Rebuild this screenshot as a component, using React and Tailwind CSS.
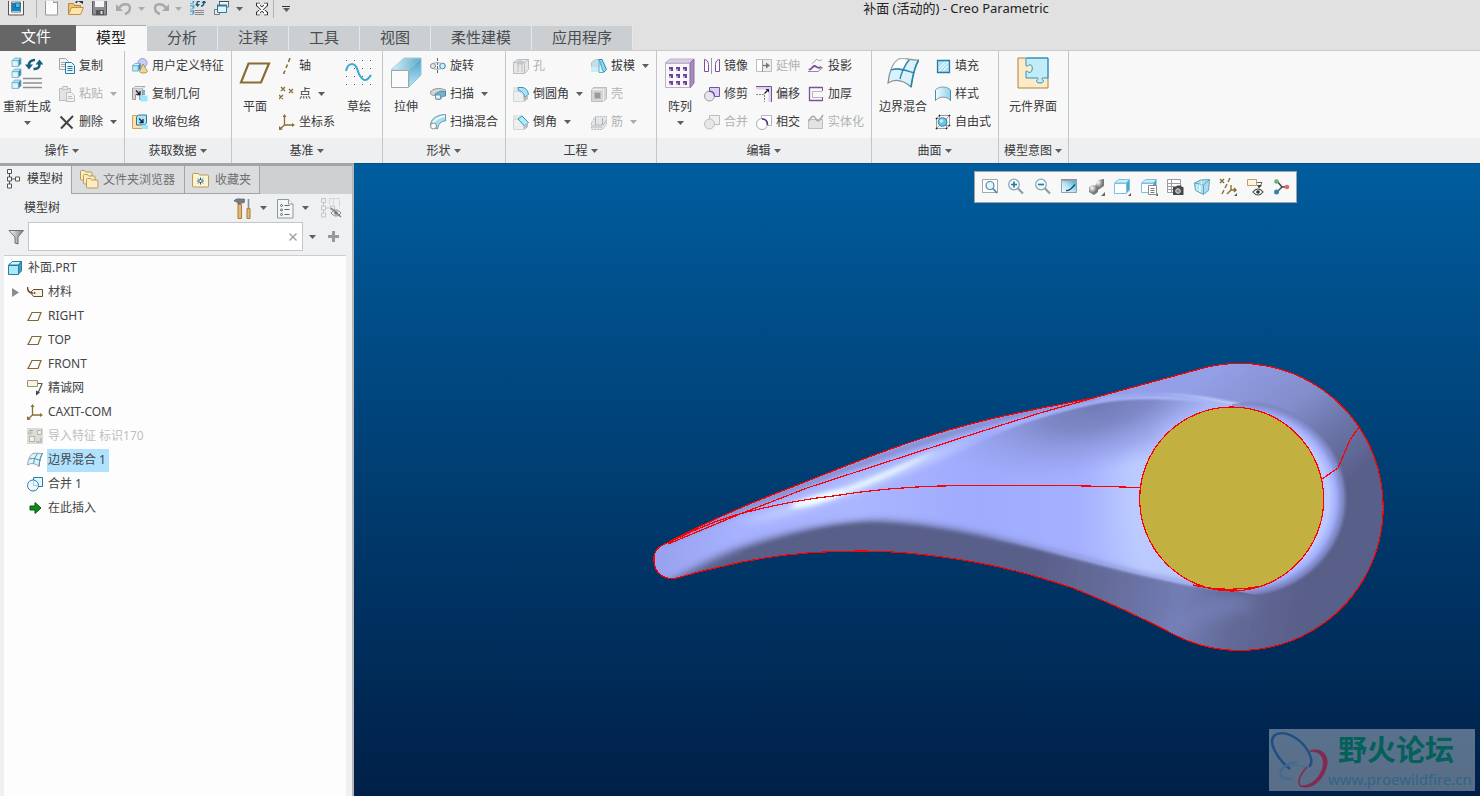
import { useState } from 'react';

const Svg = ({ s = 16, w, h, children }) => (
  <svg width={w || s} height={h || s} viewBox={`0 0 ${w || s} ${h || s}`} fill="none" className="shrink-0" aria-hidden="true">
    {children}
  </svg>
);

const Caret = ({ off, className = '' }) => (
  <svg width="7" height="4" viewBox="0 0 7 4" className={`shrink-0 ${className}`} aria-hidden="true">
    <path d="M0 0h7L3.500 4z" fill={off ? '#a9abad' : '#5c5e60'} />
  </svg>
);

const B = '#2a7ba2';
const G = '#bbbdbf';
const P = '#7b4fa0';
const T = '#8a6d35';

// Small isometric cube
const Cube = ({ x = 0, y = 0, k = 1, face = '#dff5fd', side = '#2b86ad', top = '#b4e5f6', line = '#68aac4' }) => (
  <g transform={`translate(${x} ${y}) scale(${k})`} stroke={line} strokeWidth={0.8 / k} strokeLinejoin="round">
    <path d="M0.500 3.500L3 1h6L6.500 3.500z" fill={top} />
    <path d="M6.500 3.500L9 1v5.500L6.500 9z" fill={side} />
    <path d="M0.500 3.500h6V9h-6z" fill={face} />
  </g>
);

const icons = {
  app: (
    <Svg>
      <path d="M.5 -2h15v16H.5z" fill="#f4f4f4" stroke="#555" />
      <path d="M3.500 1h9v10h-9z" fill="#fff" stroke="#777" />
      <path d="M4 2h8v8H4z" fill="#0b84c8" />
      <path d="M7.500 2h4.500v4.500H7.500z" fill="#43b9ee" stroke="#075d92" strokeWidth=".7" />
    </Svg>
  ),
  fresh: <Svg><path d="M.5 -3h8l4 4v13H.5z" fill="#fcfcfc" stroke="#999" /><path d="M8.500 -2v3.500h4" stroke="#999" fill="#ddd" /></Svg>,
  open: (
    <Svg>
      <path d="M.5 13V2.500h5l1 2h6v3" fill="#ecc36e" stroke="#b88732" />
      <path d="M0.500 13.500L3.500 6.500H15.500L12.500 13.500z" fill="#fde5ae" stroke="#c3923d" />
      <path d="M8 2c1-3 3-3 5-1.500V-1" stroke="#333" strokeWidth="1.600" /><path d="M10 0h5v3z" fill="#333" />
    </Svg>
  ),
  save: (
    <Svg>
      <path d="M0.500 -2h14v16h-14z" fill="#8b8d92" stroke="#5c5e62" />
      <path d="M3 -2h9v8H3z" fill="#f5f5f5" /><path d="M4 9h8v5H4z" fill="#54565a" /><path d="M8.500 10h2v3h-2z" fill="#ddd" />
    </Svg>
  ),
  undo: <Svg><path d="M3 7c4-6 11-4 11 0 0 3-2 5-5 6" stroke="#a8a9ab" strokeWidth="2.400" /><path d="M0 3v7h7z" fill="#a8a9ab" /></Svg>,
  redo: <Svg><path d="M13 7C9 1 2 3 2 7c0 3 2 5 5 6" stroke="#a8a9ab" strokeWidth="2.400" /><path d="M16 3v7H9z" fill="#a8a9ab" /></Svg>,
  regenSmall: (
    <Svg>
      <Cube x={-0.500} y={-2} k={0.500} /><Cube x={-0.500} y={3.500} k={0.500} /><Cube x={-0.500} y={9} k={0.500} />
      <path d="M5 9.500h9M5 11.500h9M5 13.500h9" stroke="#85878a" />
      <path d="M7 3c0-2 1-3 3-3M14 1c0 3-1 4-3 4" stroke="#155e80" strokeWidth="1.600" />
      <path d="M5 3h5L7.500 6zM11.500 2h5L14 -1z" fill="#155e80" />
    </Svg>
  ),
  windows: (
    <Svg>
      <path d="M5.500 -1h9v7h-9z" fill="#e8f6fc" stroke="#666" /><path d="M5 0h10" stroke="#4a4c50" strokeWidth="2" />
      <path d="M.5 8.500h5v5h-5z" fill="#eee" stroke="#777" />
      <path d="M3.500 4.500h9v7h-9z" fill="#e2f5fc" stroke={B} /><path d="M3 4.500h10" stroke={B} strokeWidth="2" />
    </Svg>
  ),
  close: <Svg w={14} h={16}><path d="M3 4l8 8M11 4l-8 8M1 3.500h4M9 3.500h4M1 12.500h4M9 12.500h4" stroke="#333" strokeWidth="3.600" /><path d="M3 4l8 8M11 4l-8 8M2 3.500h3M9 3.500h3M2 12.500h3M9 12.500h3" stroke="#fff" strokeWidth="1.800" /></Svg>,

  // 32px ribbon icons
  regen: (
    <Svg s={32}>
      <Cube x={0.500} y={0} k={1.050} /><Cube x={0.500} y={11} k={1.050} /><Cube x={0.500} y={22} k={1.050} />
      <path d="M12 21.500h19M12 26h19M12 30.500h19" stroke="#8d8f92" strokeWidth="1.600" />
      <path d="M18 8c0-3 2-5 6-5M28.500 7c0 4-2 5-6 5" stroke="#155e80" strokeWidth="2.600" />
      <path d="M14 7.500h8l-4 5zM24.500 7.500h8L28.500 2.500z" fill="#155e80" />
    </Svg>
  ),
  plane: <Svg s={32}><path d="M9.500 6.500H30L22 25.500H2z" stroke={T} strokeWidth="2.200" /></Svg>,
  sketch: (
    <Svg s={32}>
      {[3, 11, 19, 27].map(y => [3, 11, 19, 27].map(x => <path key={`${x}-${y}`} d={`M${x} ${y}.500h1`} stroke="#555" />))}
      <path d="M3 14C5 5 12 5 14.500 13S22 28 28 18" stroke="#3aa6d4" strokeWidth="2" />
    </Svg>
  ),
  extrude: (
    <Svg s={32}>
      <defs>
        <linearGradient id="ex" x1="0" y1="0" x2="0" y2="1"><stop stopColor="#4b9fc4" /><stop offset="1" stopColor="#b4e8f8" /></linearGradient>
        <linearGradient id="ext"><stop stopColor="#d6f3fc" /><stop offset="1" stopColor="#5fa9c8" /></linearGradient>
      </defs>
      <path d="M1 13L14 1h17L19 13z" fill="url(#ext)" stroke="#a3cddd" />
      <path d="M19 13L31 1v17L19 30z" fill="url(#ex)" stroke="#8cc2d8" />
      <path d="M1.500 13.500h17v17h-17z" fill="#fbfbfb" stroke="#a4a6a9" />
    </Svg>
  ),
  pattern: (
    <Svg s={32}>
      <path d="M1 6l5-4h24l-4 4z" fill="#d9cde6" stroke="#bdb1cb" /><path d="M26 6l4-4v24l-4 5z" fill="#a58abf" stroke="#8a6fa6" />
      <path d="M1.500 6.500h24v24h-24z" fill="#f9f7fb" stroke="#b9b5be" />
      {[10, 17, 24].map(y => [5, 12, 19].map(x => <path key={`${x}-${y}`} d={`M${x} ${y}h4v4h-4z`} fill="#6a4692" />))}
      {[10, 17, 24].map(y => [5, 12, 19].map(x => <path key={`${x}+${y}`} d={`M${x} ${y + 2}h2v2h-2z`} fill="#c3aadd" />))}
    </Svg>
  ),
  blend: (
    <Svg s={32}>
      <path d="M1 26C2 15 6 5 12 2c8-2 13 2 20 1-4 5-6 14-8 27C17 24 9 21 1 26z" fill="#d9f2fb" stroke="#8a8d91" strokeWidth="1.200" />
      <path d="M12 2c5-1 8 0 11 1-4 4-6 8-7 11-4-3-7-3-12-1 2-5 4-9 8-11z" fill="#fff" stroke="#a6a9ac" />
      <path d="M22 3c-4 4-8 14-9 19M4 13c8-3 16 1 23 3" stroke="#2686ad" strokeWidth="1.300" />
      <path d="M32 3c-4 5-6 14-8 27" stroke="#2686ad" strokeWidth="1.600" />
    </Svg>
  ),
  puzzle: (
    <Svg s={32}>
      <path d="M1 1h30v30H1z" fill="#fdebc8" />
      <path d="M9 1h22v20h-5c-2 0-1 1.500 0 2 3 4-9 4-6 0 1-.5 2-2 0-2H9v-6c0-2 1.500-1 2 0 5 3 6-9 1-7-1 1-3 2-3 0z" fill="#c3ecf9" stroke="#3093b8" />
      <path d="M10 1h21v21" stroke="#3093b8" /><path d="M9 1H1v30h30v-9" stroke="#a8853f" />
    </Svg>
  ),

  // 16px ribbon icons
  copy: (
    <Svg>
      <path d="M.5 .5h6l3 3v8h-9z" fill="#f4f4f4" stroke="#a0a2a4" /><path d="M2 4.500h5M2 6.500h4M2 8.500h4" stroke="#aaa" />
      <path d="M6.500 4.500h6l3 3v8h-9z" fill="#e7f6fc" stroke={B} /><path d="M8.500 8.500h5M8.500 10.500h5M8.500 12.500h5" stroke={B} />
    </Svg>
  ),
  paste: (
    <Svg>
      <path d="M.5 2.500h11v12H.5z" fill="#e2e3e4" stroke={G} /><path d="M3.500 .5h5v3h-5z" fill="#eee" stroke={G} />
      <path d="M7.500 6.500h5l3 3v6h-8z" fill="#f2f2f2" stroke={G} /><path d="M9 10.500h4M9 12.500h5" stroke={G} />
    </Svg>
  ),
  remove: <Svg><path d="M1.500 2.500l12 12M14 2L2 14.500" stroke="#444" strokeWidth="2" /></Svg>,
  userFeature: (
    <Svg>
      <circle cx="10.500" cy="5" r="4.500" fill="#c9ccf4" stroke="#979bd3" />
      <Cube x={0} y={4.500} k={0.950} face="#b3e9fb" top="#d8f5fe" />
      <path d="M11 6l4.500 7.500c-1 2-7 2-8 0z" fill="#f0d69a" stroke="#b3925a" />
    </Svg>
  ),
  copyGeom: (
    <Svg>
      <path d="M.5 2.500h10v11h-3v-5h-4v5h-3z" fill="#d2d4d6" stroke="#999b9e" /><path d="M1 2.500L3 .5h10l-2 2" fill="#eee" stroke="#aaa" />
      <path d="M4 4.500l4 4M8 5V8.500H4.500" stroke="#222" strokeWidth="1.300" />
      <path d="M8.500 9.500h7v6h-7z" fill="#9de7fb" /><path d="M11 4h2v5h-2z" fill="#6db6d2" />
    </Svg>
  ),
  shrink: (
    <Svg>
      <path d="M.5 1.500h6l1 1h4v12H.5z" fill="#fbe3ab" stroke="#cca55c" />
      <path d="M4.500 3l2-2h8v8l-2 2h-8z" fill="#aee4f6" stroke={B} /><path d="M7 4.500l4 4M11 5v3.500H7.500" stroke="#124" strokeWidth="1.300" />
      <path d="M10 11h6v4h-6z" fill="#9de7fb" />
    </Svg>
  ),
  axis: <Svg><path d="M11 0L9.500 4M8.500 6.500L7 10M6 12.500L4.500 16" stroke={T} strokeWidth="1.600" /></Svg>,
  points: <Svg><path d="M2 1l4 4M6 1L2 5M10 3l4 4M14 3l-4 4M0 9l4 4M4 9l-4 4" stroke={T} strokeWidth="1.300" /></Svg>,
  csys: (
    <Svg>
      <path d="M5.500 2v9h8M5.500 11l-4.500 4" stroke={T} strokeWidth="1.300" />
      <path d="M5.500 0l2 3h-4zM16 11l-3-2v4zM0 16v-4l4 3.500z" fill={T} />
    </Svg>
  ),
  revolve: (
    <Svg>
      <path d="M7.500 0v16" stroke="#666" strokeDasharray="3 1" />
      <circle cx="3" cy="8" r="2.500" fill="#e8e8e8" stroke="#84878b" /><circle cx="12.500" cy="8" r="2.800" fill="#cbeefa" stroke="#2c88ae" />
      <path d="M3 5.500c2-1 6-1 9 0M3 10.500c2 1 5 1 9 0" stroke="#a4a7aa" />
    </Svg>
  ),
  sweep: (
    <Svg>
      <path d="M.5 6c2-4 10-4 12-3l3 1v5c-3 0-4 1-5 4H7V9C4 10 .5 10 .5 6z" fill="#d2d5d8" stroke="#92969a" />
      <path d="M5 8l6-3 4.500 1v4c-3 0-4 1-5 3H6z" fill="#6fb5d3" stroke="#4b8ba8" />
      <path d="M5.500 9h5v4h-5z" fill="#dff4fb" stroke="#7d98a3" />
    </Svg>
  ),
  sweptBlend: (
    <Svg>
      <path d="M.5 11C1 5 6 1 15.500 .5V7c-5 0-7 3-8 8z" fill="#a9ddf0" stroke="#5e9bb5" />
      <path d="M3 9c2-4 6-6 12-7" stroke="#fff" strokeWidth="1.500" /><circle cx="3.500" cy="12" r="3" fill="#fafafa" stroke="#8b8d90" />
    </Svg>
  ),
  hole: (
    <Svg>
      <path d="M.5 4.500l4-3h11v10l-4 4H.5z" fill="#e6e7e8" stroke={G} />
      <path d="M.5 4.500h11l4-3M11.500 4.500v11M5 5v9M9 5v9" stroke={G} /><ellipse cx="7" cy="4.500" rx="3" ry="1.500" fill="#c8cacc" stroke={G} />
    </Svg>
  ),
  round: (
    <Svg>
      <path d="M.5 5.500h6l4 4v6H.5z" fill="#eeeeef" stroke="#d3d5d6" /><path d="M0 1h9l-3 4H0z" fill="#e3e4e5" />
      <path d="M5 1.500h5c3 1 5 3 5.500 7l-4 3c0-4-2-6-6-7z" fill="#a9e4f7" stroke="#3b94b8" /><path d="M11 12l4-3v4l-4 3z" fill="#bbbdbf" />
    </Svg>
  ),
  chamfer: (
    <Svg>
      <path d="M.5 5.500h5l5 5v5H.5z" fill="#eeeeef" stroke="#d3d5d6" /><path d="M0 1h9l-3 4H0z" fill="#e3e4e5" />
      <path d="M5 5l4-3 6.500 6.500-4 3.500z" fill="#a9ecfc" stroke="#3b94b8" /><path d="M11 12l4-3v4l-4 3z" fill="#bbbdbf" />
    </Svg>
  ),
  draft: (
    <Svg>
      <path d="M.5 4.500l4-3h6v12h-10z" fill="#c3dfe9" stroke="#a9c8d4" /><path d="M0 9h10v5H0z" fill="#c8eefa" />
      <path d="M8 1.500h3l4.500 10-3 3z" fill="#8fd8f1" stroke="#2c88ae" /><path d="M8 2l4.500 12.500H8z" fill="#d9f3fc" stroke="#62aeca" />
    </Svg>
  ),
  shell: (
    <Svg>
      <path d="M.5 3.500l2-2h13v11l-3 3H.5z" fill="#d5d6d7" stroke={G} /><path d="M.5 3.500h12v12" stroke="#eee" />
      <path d="M3.500 6.500h6v6h-6z" fill="#97999b" stroke="#bbb" />
    </Svg>
  ),
  rib: (
    <Svg>
      <path d="M.5 8.500l4-6h11v8l-4 5H.5z" fill="#e4e5e6" stroke={G} strokeDasharray="2 1" />
      <path d="M4.500 3v8h7V4M12 11l3-4" stroke="#b0b2b4" /><path d="M1 11h10v3H1z" fill="#cfd0d2" />
    </Svg>
  ),
  mirror: <Svg><path d="M7.500 0v16" stroke="#999" /><path d="M.5 1.500v12h4v-7c0-3-2-5-4-5zM15.500 1.500v12h-4v-7c0-3 2-5 4-5z" stroke={P} fill="#fff" /></Svg>,
  trim: (
    <Svg>
      <path d="M5.500 1.500h10v9h-10z" fill="#d9d3f5" stroke={P} /><circle cx="5.500" cy="10" r="5" fill="#e6e7e9" stroke="#9b9da0" />
      <path d="M5 5.200c3.500 0 5.500 2 5.500 5.300" stroke={P} strokeWidth="1.400" />
    </Svg>
  ),
  mergeOff: <Svg><path d="M5.500 1.500h10v9h-10z" fill="#efefef" stroke={G} /><circle cx="5.500" cy="10" r="5" fill="#e6e7e8" stroke={G} /></Svg>,
  extend: (
    <Svg>
      <path d="M.5 1.500h15v12H.5z" fill="#eceded" stroke={G} /><path d="M1 2h5v11H1z" fill="#fff" /><path d="M6.500 2v12" stroke="#999" />
      <path d="M7 7.500h5" stroke="#777" strokeWidth="1.300" /><path d="M14 7.500l-4-3v6z" fill="#777" />
    </Svg>
  ),
  offset: (
    <Svg>
      <path d="M0 2h14v14" stroke="#dcd3e6" strokeWidth="3" /><path d="M0 .5h15.500V16" stroke={P} />
      <path d="M0 8.500h8.500V16" stroke="#888" strokeDasharray="2 1" /><path d="M8.500 7.500l3-3" stroke="#222" strokeWidth="1.200" /><path d="M13 3v3.500L9.500 3z" fill="#222" />
    </Svg>
  ),
  intersect: <Svg><path d="M5.500 1.500h10v10h-10z" fill="#fff" stroke="#b3b5b8" /><circle cx="6" cy="10" r="5.500" fill="#fff" stroke="#a9abae" /><path d="M6 5c4 0 5.500 2.500 5.500 6" stroke="#5a3385" strokeWidth="1.700" /></Svg>,
  project: (
    <Svg>
      <path d="M4 5c2 1 3-4 5-3.500s2 2.500 5 0" stroke="#9b9da0" />
      <path d="M1 11c2 2 3-3 5.500-3s2 3.500 7 1" stroke={P} strokeWidth="1.800" /><path d="M0 13.500h10l5-4" stroke="#8b8d90" />
    </Svg>
  ),
  thicken: <Svg><path d="M14.500 1.500h-13v13h13" stroke={P} strokeWidth="1.300" /><path d="M14 5.500H4.500v6H14" stroke="#b5b5b5" /><path d="M14.500 1v4M14.500 11v4" stroke={P} /></Svg>,
  solidify: <Svg><path d="M.5 5.500h14v9H.5z" fill="#e2e3e4" stroke={G} /><path d="M1 7c3-6 5-6 7-2s4 1 7-4" stroke="#a9abad" strokeWidth="1.600" /></Svg>,
  fill: (
    <Svg>
      <path d="M2.500 2.500h12v12h-12z" fill="#aee2f4" stroke={B} strokeWidth="1.300" /><path d="M4 10l6-6M4 13l9-9M8 13l5-5" stroke="#fff" />
    </Svg>
  ),
  style: (
    <Svg>
      <defs><linearGradient id="sty"><stop stopColor="#f2fbfe" /><stop offset="1" stopColor="#8fd3ec" /></linearGradient></defs>
      <path d="M.5 14.500V4C4 0 12 0 15.500 4v10.500C12 10 4 10 .5 14.500z" fill="url(#sty)" stroke="#87999f" />
      <path d="M.5 4v10.500M15.500 4v10.500" stroke="#3d92b3" />
    </Svg>
  ),
  freestyle: (
    <Svg>
      <path d="M1.500 4.500h10v10h-10zM4.500 1.500h10v10h-10zM1.500 4.500l3-3M11.500 4.500l3-3M11.500 14.500l3-3M1.500 14.500l3-3" stroke="#9a9c9e" />
      <circle cx="7.500" cy="8" r="4.300" fill="#6cc4e4" stroke="#2c88ae" /><circle cx="6.500" cy="7" r="1.800" fill="#c7effb" />
      {[[1, 4], [1, 14], [11, 14], [14, 1], [14, 11], [4, 1]].map(([x, y]) => <path key={`${x}-${y}`} d={`M${x} ${y}h1v1h-1z`} fill="#222" stroke="#222" strokeWidth=".6" />)}
    </Svg>
  ),

  // Navigator
  treeTab: <Svg w={14} h={20}><path d="M1.500 .5h4v4h-4zM1.500 8h4v4h-4zM1.500 15h4v4h-4zM9.500 8h4v4h-4z" fill="#fff" stroke="#555" /><path d="M3.500 5v3M3.500 12v3M6 10h3" stroke="#555" /></Svg>,
  folders: (
    <Svg w={19} h={19}>
      {[[0, 0], [3, 4], [6, 8]].map(([x, y]) => (
        <path key={x} d={`M${x + 0.500} ${y + 1.500}q0-1 1-1h3l1 1.500h5.500q1 0 1 1v6q0 1-1 1h-9.500q-1 0-1-1z`} fill="#fcecc0" stroke="#b99a5e" />
      ))}
    </Svg>
  ),
  favorites: (
    <Svg w={17} h={16}>
      <path d="M.5 2.500q0-1 1-1h5l1 1.500h8q1 0 1 1v10q0 1-1 1h-14q-1 0-1-1z" fill="#fdf3d3" stroke="#b99a5e" />
      <path d="M8.500 5.500v7M5 9h7M6 6.500l5 5M11 6.500l-5 5" stroke="#14607f" /><circle cx="8.500" cy="9" r="1" fill="#fff" />
    </Svg>
  ),
  tools: (
    <Svg w={18} h={21}>
      <path d="M0 3C1 1 4 .5 6 1h4.500v3l-1 1H7.500L6.500 6H4L3 4z" fill="#777b84" stroke="#555963" strokeWidth=".6" />
      <path d="M4 6.500h3.500v14H4z" fill="#e3ba70" stroke="#a67f3a" /><path d="M14.500 1v10" stroke="#8a8e96" strokeWidth="1.600" />
      <path d="M13 10.500h3v10h-3z" fill="#e3ba70" stroke="#a67f3a" />
    </Svg>
  ),
  settings: (
    <Svg w={17} h={21}>
      <path d="M.5 1.500h11l4.500 4.500v14H.5z" fill="#f2f7f9" stroke="#8d989e" /><path d="M11.500 1.500V6H16" stroke="#8d989e" fill="#fff" />
      <circle cx="4.500" cy="7.500" r="1" stroke="#666" /><circle cx="4.500" cy="12" r="1" stroke="#666" /><circle cx="4.500" cy="16.500" r="1" stroke="#666" />
      <path d="M7.500 7.500h5M7.500 11.500h5M7.500 16.500h5" stroke="#666" />
    </Svg>
  ),
  treeHide: (
    <Svg w={21} h={20}>
      <path d="M.5 .5h4v4h-4zM.5 8h4v4h-4zM.5 15h4v4h-4zM9.500 8h4v4h-4zM2.500 5v3M2.500 12v3M5 10h4" stroke="#c2c4c6" />
      <path d="M8.500 .5v6M12.500 .5v6M18.500 .5v8M8 .5h10" stroke="#d4d6d8" />
      <path d="M10 15c3-4 7-4 10 0-3 4-7 4-10 0z" stroke="#888a8c" fill="#e9eaeb" /><circle cx="15" cy="15" r="1.800" fill="#777" /><path d="M10 10l10 9" stroke="#777" strokeWidth="1.200" />
    </Svg>
  ),
  funnel: (
    <Svg>
      <defs><linearGradient id="fn"><stop stopColor="#fff" /><stop offset="1" stopColor="#777" /></linearGradient></defs>
      <path d="M1 1.500h14.500L10 8v7l-3-1V8z" fill="url(#fn)" stroke="#6f7173" />
    </Svg>
  ),
  plus: <Svg w={11} h={11}><path d="M5.500 0v11M0 5.500h11" stroke="#97999b" strokeWidth="3" /></Svg>,
  part: <Svg w={15} h={14}><path d="M.5 4l4-3.500h9L11 4z" fill="#d4f5fe" stroke={B} /><path d="M10.500 4l3-3.500V10l-3 3z" fill="#3c9ec4" stroke={B} /><path d="M.5 4.500h10v9H.5z" fill="#a7eafc" stroke={B} /></Svg>,
  material: (
    <Svg>
      <path d="M6.500 5.500l-3 3 3 4h9v-7z" fill="#faf3e0" stroke="#674a38" /><circle cx="7.500" cy="9" r="1" fill="#674a38" />
      <path d="M6 9C2 9 .5 6 .5 3" stroke="#674a38" strokeWidth="1.400" />
    </Svg>
  ),
  planeSmall: <Svg><path d="M5 4.500h9L11 12.500H1z" stroke="#806638" strokeWidth="1.200" /></Svg>,
  note: <Svg><path d="M.5 .5h10v6H.5z" fill="#fdf3d9" stroke="#9a9284" /><path d="M11 3.500h4.500M15 4l-4 9" stroke="#555" strokeWidth="1.200" /><path d="M9 15.500l0-5 4 2z" fill="#444" /></Svg>,
  imported: (
    <Svg>
      <path d="M0 0h16v16H0z" fill="#dcdcd6" /><path d="M2.500 8.500h5v5h-5zM10.500 2.500h4v4h-4z" fill="#efefec" stroke="#b4b4a8" />
      <path d="M6 2.500H3V5M1 4.500l2 2 2-2M9 14h5v-4" stroke="#a7a79b" />
    </Svg>
  ),
  blendSmall: (
    <Svg>
      <path d="M.5 13C1 8 3 3 6 1.500c4-1 6 .5 9.500 0-2 3-3 7-3.500 13C9 11.500 4 10.500 .5 13z" fill="#e0f3fa" stroke="#94a2a9" />
      <path d="M10.500 1.500C8 5 7 8 6.500 11.500M2.500 7c4-1.500 8 .5 11 1.500M15.500 1.500c-2 3-3 7-3.500 13" stroke="#3f94b7" />
    </Svg>
  ),
  merge: <Svg><path d="M6.500 1.500h9v9h-9z" fill="#e2f5fc" stroke={B} /><circle cx="6" cy="9.500" r="5.500" fill="#eefaff" stroke={B} /><path d="M6.500 4v5.500h5" stroke="#9fd0e3" /></Svg>,
  insert: <Svg><path d="M3 6h5V2.500L14 8l-6 5.500V10H3z" fill="#0c8d16" stroke="#07560c" /></Svg>,

  // Graphics toolbar
  refit: <Svg s={18}><path d="M1.500 1.500h15v13h-15z" fill="#fff" stroke="#a4a6a8" /><circle cx="9" cy="7.500" r="4" fill="#e4f5fb" stroke="#4d8ba7" strokeWidth="1.200" /><path d="M12 10.500l4 4.500" stroke="#4d8ba7" strokeWidth="1.800" /></Svg>,
  zoomIn: <Svg s={18}><circle cx="7" cy="6.500" r="5.300" fill="#f2fbfe" stroke="#8ba4af" strokeWidth="1.200" /><path d="M4 6.500h6M7 3.500v6" stroke={B} strokeWidth="1.700" /><path d="M11 10.500l5 5" stroke="#8f9ca2" strokeWidth="2.200" /></Svg>,
  zoomOut: <Svg s={18}><circle cx="7" cy="6.500" r="5.300" fill="#f2fbfe" stroke="#8ba4af" strokeWidth="1.200" /><path d="M4 6.500h6" stroke={B} strokeWidth="1.700" /><path d="M11 10.500l5 5" stroke="#8f9ca2" strokeWidth="2.200" /></Svg>,
  repaint: (
    <Svg s={18}>
      <defs><linearGradient id="rp" x1="1" y1="0" x2="0" y2="1"><stop stopColor="#4ba5cb" /><stop offset=".6" stopColor="#c9e9f5" /><stop offset="1" stopColor="#f4fcff" /></linearGradient></defs>
      <path d="M1.500 2.500h15v12h-15z" fill="url(#rp)" stroke="#8ba4af" /><path d="M1 1.500h16" stroke="#8f9194" /><path d="M6 12.500c2 .5 5-1 9-6" stroke="#14526f" strokeWidth="1.400" />
    </Svg>
  ),
  shading: (
    <Svg s={18}>
      <defs><radialGradient id="sh" cx=".35" cy=".3"><stop stopColor="#fff" /><stop offset="1" stopColor="#76787b" /></radialGradient></defs>
      <path d="M8 8l3-6 6-1v7l-6 4z" fill="url(#sh)" /><path d="M2 9l4-2 5 2v5l-4 3-5-3z" fill="url(#sh)" /><path d="M14 18h4v-4z" fill="#666" />
    </Svg>
  ),
  display: <Svg s={18}><path d="M1.500 5l4-3.500h11L13.500 5z" fill="#c5effb" stroke="#7cc1db" /><path d="M13.500 5l3-3.500V12l-3 3z" fill="#4ba8cc" stroke="#7cc1db" /><path d="M1.500 5.500h12v10h-12z" fill="#fcfeff" stroke="#7cc1db" /><path d="M15 18h3v-3z" fill="#555" /></Svg>,
  savedViews: (
    <Svg s={18}>
      <path d="M1.500 5l4-3.500h11L13.500 5z" fill="#c5effb" stroke="#7cc1db" /><path d="M1.500 5.500h12v9h-12z" fill="#fcfeff" stroke="#7cc1db" /><path d="M13.500 5l3-3.500V8h-3z" fill="#4ba8cc" />
      <path d="M8.500 7.500h8v9h-8z" fill="#fff" stroke="#888" /><path d="M10.500 10.500h4M10.500 12.500h4M10.500 14.500h4" stroke="#777" /><path d="M16 18h2v-3z" fill="#555" />
    </Svg>
  ),
  viewManager: (
    <Svg s={18}>
      <path d="M1.500 1.500h13v13h-13zM1.500 5.500h13M1.500 8.500h13M1.500 11.500h13M5.500 1.500v13" stroke="#999b9e" fill="#fff" />
      <path d="M7 9h3l1-1.500h4L16 9h1.500v8H7z" fill="#44474b" /><circle cx="12" cy="13" r="2.300" fill="#888" stroke="#ddd" />
    </Svg>
  ),
  perspective: (
    <Svg s={18}>
      <path d="M1.500 5l6-3 9-.5-1 11-5 4-8-4z" fill="#a8dbed" stroke="#5fa6c1" /><path d="M1.500 5l9 2 6-5.500M10.500 7v9" stroke="#5fa6c1" />
      <path d="M4 6v7M6.500 6.500V14M8.500 3l-1 11" stroke="#e4f6fc" />
    </Svg>
  ),
  datums: <Svg s={18}><path d="M1 1l4 4M5 1L1 5M11 0L9 4M8 6l-2 4M5 12l-2 4M12 7v5h5M12 12l-4 4M15 10l2 2-2 2" stroke={T} strokeWidth="1.400" /><path d="M15 18h3v-3z" fill="#555" /></Svg>,
  annotations: (
    <Svg s={18}>
      <path d="M1.500 1.500h9v6h-9z" fill="#fdf3d9" stroke="#b3a478" /><path d="M11 4.500h5l-2 4" stroke="#666" /><path d="M11 7h5l-3 3.500z" fill="#444" />
      <path d="M7 14c3-4 7-4 10 0-3 4-7 4-10 0z" fill="#fff" stroke="#444" strokeWidth="1.200" /><circle cx="12" cy="14" r="1.800" fill="#333" />
    </Svg>
  ),
  spin: <Svg s={18}><path d="M5 3l5 6M10 9l6 0M10 9l-5 5" stroke="#444" strokeWidth="1.400" /><circle cx="4.500" cy="3.500" r="2.300" fill="#6bb06d" /><circle cx="4.500" cy="14" r="2.500" fill="#3785ad" /><circle cx="15" cy="9" r="2.300" fill="#e06a6a" /></Svg>,
};

const Small = ({ icon, label, caret, off }) => (
  <button type="button" disabled={off} className={`flex h-7 items-center gap-1 whitespace-nowrap ${off ? 'text-[#b0b2b4]' : 'text-[#38393b]'}`}>
    {icons[icon]}
    <span>{label}</span>
    {caret && <Caret off={off} className="ml-[3px]" />}
  </button>
);

const Big = ({ icon, label, caret, className = 'w-[46px]' }) => (
  <button type="button" className={`flex shrink-0 flex-col items-center pt-[5px] text-[#38393b] ${className}`}>
    {icons[icon]}
    <span className="mt-2 leading-5 whitespace-nowrap">{label}</span>
    {caret && <Caret className="mt-1" />}
  </button>
);

const Column = ({ items, className = '' }) => (
  <div className={`flex flex-col items-start ${className}`}>
    {items.map(it => <Small key={it.label} {...it} />)}
  </div>
);

const Group = ({ title, className, children }) => (
  <section className={`flex shrink-0 flex-col border-r border-[#c2c5c9] ${className}`}>
    <div className="flex h-[87px] items-start pt-px">{children}</div>
    <button type="button" className="flex h-[25px] items-center justify-center gap-[3px] bg-[#eeeff1] pr-px whitespace-nowrap text-[#38393b]">
      {title}<Caret />
    </button>
  </section>
);

const Divider = ({ className = '' }) => <span className={`h-[18px] w-px bg-[#b0b2b4] ${className}`} />;

const TitleBar = () => (
  <header className="flex h-[25px] items-start bg-[#e1e1e1] pl-2">
    <div className="flex items-center gap-2">
      <button type="button" aria-label="窗口">{icons.app}</button>
      <Divider className="ml-1" />
      <button type="button" aria-label="新建">{icons.fresh}</button>
      <button type="button" aria-label="打开" className="-ml-px">{icons.open}</button>
      <button type="button" aria-label="保存">{icons.save}</button>
      <button type="button" aria-label="撤消" className="flex items-center gap-[6px]">{icons.undo}<Caret off /></button>
      <button type="button" aria-label="重做" className="flex items-center gap-[6px]">{icons.redo}<Caret off /></button>
      <button type="button" aria-label="重新生成">{icons.regenSmall}</button>
      <button type="button" aria-label="切换窗口" className="flex items-center gap-[6px]">{icons.windows}<Caret /></button>
      <button type="button" aria-label="关闭" className="ml-1">{icons.close}</button>
      <Divider className="-ml-1" />
      <button type="button" aria-label="自定义" className="flex flex-col items-center gap-px">
        <span className="h-px w-2 bg-[#333]" /><Caret />
      </button>
    </div>
    <h1 className="flex-1 pl-[142px] text-center text-[13px] leading-4 text-[#222]">补面 (活动的) - Creo Parametric</h1>
  </header>
);

const tabs = ['模型', '分析', '注释', '工具', '视图', '柔性建模', '应用程序'];

const TabBar = () => {
  const [active, setActive] = useState('模型');
  return (
    <nav className="flex h-[26px] items-stretch border-b border-[#c8cbce] bg-[#e1e1e1] text-[15px] leading-[22px]">
      <button type="button" className="-mb-px w-[76px] bg-[#666] pr-1 pb-1 text-white">文件</button>
      {tabs.map(t => (
        <button key={t} type="button" onClick={() => setActive(t)}
          className={active === t
            ? '-mb-px border-t border-r border-t-[#a8aaac] border-r-[#f8f8f8] bg-[#f8f8f8] px-5 pb-1 text-[#222]'
            : 'mt-px border-r border-[#e6e8e9] bg-[#cbcfd2] px-5 pb-[3px] text-[#4a4c4e]'}>
          {t}
        </button>
      ))}
    </nav>
  );
};

const Ribbon = () => (
  <div className="flex overflow-hidden bg-[#f8f8f8]">
    <Group title="操作" className="w-[125px]">
      <Big icon="regen" label="重新生成" caret className="w-[54px]" />
      <Column className="pl-[5px]" items={[
        { icon: 'copy', label: '复制' },
        { icon: 'paste', label: '粘贴', caret: true, off: true },
        { icon: 'remove', label: '删除', caret: true },
      ]} />
    </Group>
    <Group title="获取数据" className="w-[107px]">
      <Column className="pl-[7px]" items={[
        { icon: 'userFeature', label: '用户定义特征' },
        { icon: 'copyGeom', label: '复制几何' },
        { icon: 'shrink', label: '收缩包络' },
      ]} />
    </Group>
    <Group title="基准" className="w-[151px]">
      <Big icon="plane" label="平面" />
      <Column className="pl-px" items={[
        { icon: 'axis', label: '轴' },
        { icon: 'points', label: '点', caret: true },
        { icon: 'csys', label: '坐标系' },
      ]} />
      <Big icon="sketch" label="草绘" className="w-12" />
    </Group>
    <Group title="形状" className="w-[123px]">
      <Big icon="extrude" label="拉伸" />
      <Column className="pl-px" items={[
        { icon: 'revolve', label: '旋转' },
        { icon: 'sweep', label: '扫描', caret: true },
        { icon: 'sweptBlend', label: '扫描混合' },
      ]} />
    </Group>
    <Group title="工程" className="w-[151px]">
      <Column className="pl-[7px]" items={[
        { icon: 'hole', label: '孔', off: true },
        { icon: 'round', label: '倒圆角', caret: true },
        { icon: 'chamfer', label: '倒角', caret: true },
      ]} />
      <Column className="pl-2" items={[
        { icon: 'draft', label: '拔模', caret: true },
        { icon: 'shell', label: '壳', off: true },
        { icon: 'rib', label: '筋', caret: true, off: true },
      ]} />
    </Group>
    <Group title="编辑" className="w-[215px]">
      <Big icon="pattern" label="阵列" caret />
      <Column className="pl-px" items={[
        { icon: 'mirror', label: '镜像' },
        { icon: 'trim', label: '修剪' },
        { icon: 'mergeOff', label: '合并', off: true },
      ]} />
      <Column className="pl-2" items={[
        { icon: 'extend', label: '延伸', off: true },
        { icon: 'offset', label: '偏移' },
        { icon: 'intersect', label: '相交' },
      ]} />
      <Column className="pl-2" items={[
        { icon: 'project', label: '投影' },
        { icon: 'thicken', label: '加厚' },
        { icon: 'solidify', label: '实体化', off: true },
      ]} />
    </Group>
    <Group title="曲面" className="w-[127px]">
      <Big icon="blend" label="边界混合" className="w-[62px]" />
      <Column className="pl-px" items={[
        { icon: 'fill', label: '填充' },
        { icon: 'style', label: '样式' },
        { icon: 'freestyle', label: '自由式' },
      ]} />
    </Group>
    <Group title="模型意图" className="w-[70px]">
      <Big icon="puzzle" label="元件界面" className="w-[68px]" />
    </Group>
    <div className="flex flex-1 flex-col justify-end"><div className="h-[25px] bg-[#eeeff1]" /></div>
  </div>
);

const treeItems = [
  { icon: 'material', label: '材料', expandable: true },
  { icon: 'planeSmall', label: 'RIGHT' },
  { icon: 'planeSmall', label: 'TOP' },
  { icon: 'planeSmall', label: 'FRONT' },
  { icon: 'note', label: '精诚网' },
  { icon: 'csys', label: 'CAXIT-COM' },
  { icon: 'imported', label: '导入特征 标识170', off: true },
  { icon: 'blendSmall', label: '边界混合 1' },
  { icon: 'merge', label: '合并 1' },
  { icon: 'insert', label: '在此插入' },
];

const Navigator = () => {
  const [selected, setSelected] = useState('边界混合 1');
  const [filter, setFilter] = useState('');
  return (
    <aside className="flex w-[354px] shrink-0 flex-col border-t-[3px] border-r-2 border-t-[#a2a4a7] border-r-[#b4b6b9] bg-[#eff0f2]">
      <div className="flex h-7 shrink-0 bg-[#cfd0d2]">
        <button type="button" className="flex w-[71px] items-center gap-[7px] bg-[#eff0f2] pb-[2px] pl-[6px] whitespace-nowrap text-[#38393b]">
          {icons.treeTab}模型树
        </button>
        <button type="button" className="flex w-[113px] items-center gap-1 border-b border-l border-[#a2a4a7] bg-[#dadcdd] pl-2 whitespace-nowrap text-[#6e7072]">
          {icons.folders}文件夹浏览器
        </button>
        <button type="button" className="flex w-[76px] items-center gap-[6px] border-r border-b border-l border-[#a2a4a7] bg-[#dadcdd] pl-[7px] whitespace-nowrap text-[#6e7072]">
          {icons.favorites}收藏夹
        </button>
      </div>

      <div className="flex h-7 shrink-0 items-center pr-[10px] pl-6">
        <h2 className="flex-1 text-[#38393b]">模型树</h2>
        <button type="button" aria-label="工具" className="flex items-center gap-2">{icons.tools}<Caret /></button>
        <button type="button" aria-label="设置" className="ml-[10px] flex items-center gap-2">{icons.settings}<Caret /></button>
        <button type="button" aria-label="隐藏" className="ml-3">{icons.treeHide}</button>
      </div>

      <div className="flex h-[29px] shrink-0 items-center pr-[13px] pl-2">
        {icons.funnel}
        <div className="ml-1 flex h-[29px] flex-1 items-center border border-[#c3c6c9] bg-white pr-1">
          <input type="text" aria-label="过滤" value={filter} onChange={e => setFilter(e.target.value)} className="h-full min-w-0 flex-1 px-2 outline-none" />
          <button type="button" aria-label="清除" onClick={() => setFilter('')}>
            <Svg w={10} h={10}><path d="M1.500 1.500l7 7M8.500 1.500l-7 7" stroke="#9b9d9f" strokeWidth="1.300" /></Svg>
          </button>
        </div>
        <button type="button" aria-label="过滤选项" className="mr-3 ml-[6px] flex"><Caret /></button>
        <button type="button" aria-label="添加">{icons.plus}</button>
      </div>

      <ul className="mt-1 mr-[6px] ml-1 flex-1 border-t border-[#cbcdd0] bg-[#fdfdfd] text-[#444547]">
        <li>
          <button type="button" className="flex h-6 items-center gap-[5px] pl-1">{icons.part}补面.PRT</button>
        </li>
        {treeItems.map(it => (
          <li key={it.label} className="flex h-6 items-center">
            <span className="flex w-[23px] justify-center">
              {it.expandable && <Svg w={7} h={9}><path d="M0 0l7 4.500L0 9z" fill="#8a8c8e" /></Svg>}
            </span>
            <button type="button" onClick={() => setSelected(it.label)} className={`flex h-6 items-center gap-1 ${it.off ? 'text-[#bdbfc1]' : ''}`}>
              {icons[it.icon]}
              <span className={`flex h-[23px] items-center pr-[3px] pl-px whitespace-nowrap ${selected === it.label ? 'bg-[#b0e2ff]' : ''}`}>{it.label}</span>
            </button>
          </li>
        ))}
      </ul>
    </aside>
  );
};

const outline = 'M667 543C710 520 755 501 800 484C855 462 910 440 967 425C1010 413 1055 406 1097 397L1163 379L1200 369A143.500 143.500 0 1 1 1177 636C1141 617 1108 602 1073 588C1040 577 1015 570 990 565C945 556 903 551 860 551C810 551 763 556 720 567C705 570 690 574 677 578C664 581 654 572 654 561C653 550 660 546 667 543Z';

const Model = () => (
  <svg viewBox="354 164 1126 632" preserveAspectRatio="xMidYMid slice" className="block h-full w-full" role="img" aria-label="补面">
    <defs>
      <clipPath id="body"><path d={outline} /></clipPath>
      <linearGradient id="base" gradientUnits="userSpaceOnUse" x1="660" y1="0" x2="1150" y2="0">
        <stop stopColor="#98a2ee" /><stop offset=".15" stopColor="#a6b1ff" /><stop offset=".4" stopColor="#aab6ff" />
        <stop offset=".65" stopColor="#9fabfc" /><stop offset=".85" stopColor="#a4b0ff" /><stop offset="1" stopColor="#bccbff" />
      </linearGradient>
      <linearGradient id="ring" gradientUnits="userSpaceOnUse" x1="1215" y1="370" x2="1335" y2="520">
        <stop stopColor="#939fe6" /><stop offset=".4" stopColor="#838dcb" /><stop offset=".6" stopColor="#6e77ac" /><stop offset=".9" stopColor="#585e88" />
      </linearGradient>
      <linearGradient id="under" gradientUnits="userSpaceOnUse" x1="1030" y1="560" x2="1310" y2="610">
        <stop stopColor="#585e88" /><stop offset=".3" stopColor="#656d9b" /><stop offset=".55" stopColor="#737db5" />
        <stop offset=".75" stopColor="#626996" /><stop offset="1" stopColor="#585e88" />
      </linearGradient>
      <radialGradient id="shade" gradientUnits="userSpaceOnUse" cx="0" cy="0" r="1" gradientTransform="translate(1098 404) rotate(-14) scale(165 68)">
        <stop stopColor="#707ab4" /><stop offset=".35" stopColor="#7f89c8" /><stop offset=".7" stopColor="#929de6" stopOpacity=".7" /><stop offset="1" stopColor="#9ba7f6" stopOpacity="0" />
      </radialGradient>
      <radialGradient id="bore" gradientUnits="userSpaceOnUse" cx="0" cy="0" r="1" gradientTransform="translate(1242 499) scale(106 99)">
        <stop offset=".82" stopColor="#bccaff" /><stop offset=".89" stopColor="#a2aefc" /><stop offset=".96" stopColor="#818bc9" stopOpacity=".8" /><stop offset="1" stopColor="#6b74a8" stopOpacity="0" />
      </radialGradient>
      <linearGradient id="crease" gradientUnits="userSpaceOnUse" x1="980" y1="0" x2="1195" y2="0">
        <stop stopColor="#a7b3ff" stopOpacity="0" /><stop offset=".4" stopColor="#a7b3ff" stopOpacity=".6" /><stop offset="1" stopColor="#adb9ff" />
      </linearGradient>
      <linearGradient id="rim" gradientUnits="userSpaceOnUse" x1="920" y1="0" x2="1235" y2="0">
        <stop stopColor="#a9b5ff" stopOpacity="0" /><stop offset=".3" stopColor="#a6b2fb" /><stop offset=".75" stopColor="#98a4ee" /><stop offset="1" stopColor="#c9d8ff" />
      </linearGradient>
      {[1, 2, 4, 8, 14].map(n => (
        <filter key={n} id={`b${n}`} filterUnits="userSpaceOnUse" x="354" y="164" width="1126" height="632"><feGaussianBlur stdDeviation={n} /></filter>
      ))}
    </defs>
    <g clipPath="url(#body)">
      <path d={outline} fill="url(#base)" />
      <ellipse cx="1170" cy="500" rx="48" ry="85" fill="#bccbff" filter="url(#b14)" />
      <path d="M940 464C1000 428 1050 412 1097 403C1140 396 1190 398 1235 408L1180 470L1000 486z" fill="url(#shade)" filter="url(#b1)" />
      <path d="M1160 430Q1190 402 1240 406L1232 430L1160 470z" fill="#b2beff" opacity=".7" filter="url(#b8)" />
      <path d="M1085 401L1180 340H1420V700H1150L1196 587A92 92 0 0 0 1240 407C1190 396 1140 394 1085 401z" fill="url(#ring)" filter="url(#b2)" />
      <path d="M666 541C800 484 920 438 1040 409L1097 397" stroke="#8690d2" strokeWidth="7" fill="none" filter="url(#b2)" />
      <path d="M925 456C980 433 1040 414 1100 401S1190 395 1240 405" stroke="url(#rim)" strokeWidth="3" fill="none" filter="url(#b1)" />

      {/* underside */}
      <path d="M650 592C690 572 715 556 740 548C780 534 830 523 880 521C940 524 990 537 1040 550L1097 564L1147 577L1200 586L1240 594Q1290 590 1330 560L1400 560V700H1150L990 600L860 580z" fill="url(#under)" filter="url(#b4)" />
      <path d="M735 554C790 535 830 524 870 523C940 526 990 540 1040 550C1090 563 1150 578 1200 587V640H1100L990 575L860 560z" fill="url(#under)" filter="url(#b2)" />
      <path d="M980 534C1020 542 1070 556 1110 566S1170 580 1195 585" stroke="url(#crease)" strokeWidth="2.500" fill="none" filter="url(#b1)" />
      <path d="M1160 636Q1195 608 1250 602" stroke="#7781ba" strokeWidth="12" fill="none" filter="url(#b8)" />

      {/* fillet around the bore */}
      <path d="M1232 404L1330 390L1400 500L1330 610L1250 594L1232 590z" fill="url(#bore)" />

      {/* ridge highlight */}
      <path d="M735 524C790 508 870 478 985 434C950 452 860 498 760 520z" fill="#d0e0ff" filter="url(#b4)" />
      <path d="M785 507C830 499 880 474 940 449C900 472 840 500 785 507z" fill="#f4ffff" filter="url(#b2)" />
      <ellipse cx="818" cy="499" rx="28" ry="4" transform="rotate(-16 818 499)" fill="#f4ffff" filter="url(#b2)" />
    </g>
    <circle cx="1231.700" cy="499" r="92" fill="#c2b140" />
    <g fill="none" stroke="#f00" strokeWidth="1.200" shapeRendering="crispEdges">
      <path d={outline} />
      <circle cx="1231.700" cy="499" r="92" />
      <path d="M668 543C690 532 715 520 747 512C775 505 805 499 833 496C870 490 905 487 940 486C990 485 1040 485 1087 486L1140 487.500" />
      <path d="M668 544L740 514L807 488L893 460L967 436L1040 413L1097 397" />
      <path d="M1322 479L1338 468L1350 440L1359 427" />
      <path d="M1193 585Q1228 593 1262 586" />
    </g>
  </svg>
);

const viewTools = [
  ['refit', '重新调整'], ['zoomIn', '放大'], ['zoomOut', '缩小'], ['repaint', '重画'], ['shading', '渲染'], ['display', '显示样式'],
  ['savedViews', '已保存方向'], ['viewManager', '视图管理器'], ['perspective', '透视图'], ['datums', '基准显示'], ['annotations', '注释显示'], ['spin', '旋转中心'],
];

const Watermark = () => (
  <div className="absolute right-[5px] bottom-[5px] flex h-[62px] w-[206px] items-center bg-white/35">
    <svg width="60" height="62" viewBox="0 0 60 62" fill="none" className="shrink-0" aria-hidden="true">
      <path d="M21 40C8 30 -2 12 6 6C16 0 32 10 39 22C43 29 43 35 40 38" stroke="#1f4f82" strokeWidth="2.400" />
      <path d="M28 33C20 33 11 39 11.500 45C12 49 17 51 23 49" stroke="#426992" strokeWidth="2.200" />
      <path d="M18 37C24 35 30 36 36 38" stroke="#426992" />
      <path d="M41 22C53 18 61 27 57 39C53 53 41 61 31 57C42 58 51 49 54 38C56 28 51 22 41 22z" fill="#85284f" stroke="#85284f" />
      <path d="M31 57C28 52 32 44 38 38" stroke="#85284f" strokeWidth="1.500" />
    </svg>
    <div className="-ml-px flex flex-col">
      <span className="pl-[10px] text-[29px] leading-[38px] font-bold text-[#04605a]">野火论坛</span>
      <a href="#top" className="text-[15px] leading-5 text-[#2f6683]">www.proewildfire.cn</a>
    </div>
  </div>
);

const Viewport = () => (
  <main className="relative min-w-0 flex-1 overflow-hidden border-t border-[#0b4f80] bg-linear-to-b from-[#005d9e] to-[#002048]">
    <Model />
    <div className="absolute top-[7px] right-[183px] flex h-8 w-[323px] items-center justify-between border border-[#a0a2a5] bg-[#f8f8f8] px-[6px]">
      {viewTools.map(([icon, label]) => <button key={icon} type="button" aria-label={label}>{icons[icon]}</button>)}
    </div>
    <Watermark />
  </main>
);

export default function App() {
  return (
    <div id="top" className="flex h-screen flex-col overflow-hidden font-['Noto_Sans','Noto_Sans_CJK_SC',sans-serif] text-[12px] leading-4">
      <TitleBar />
      <TabBar />
      <Ribbon />
      <div className="flex min-h-0 flex-1">
        <Navigator />
        <Viewport />
      </div>
    </div>
  );
}
